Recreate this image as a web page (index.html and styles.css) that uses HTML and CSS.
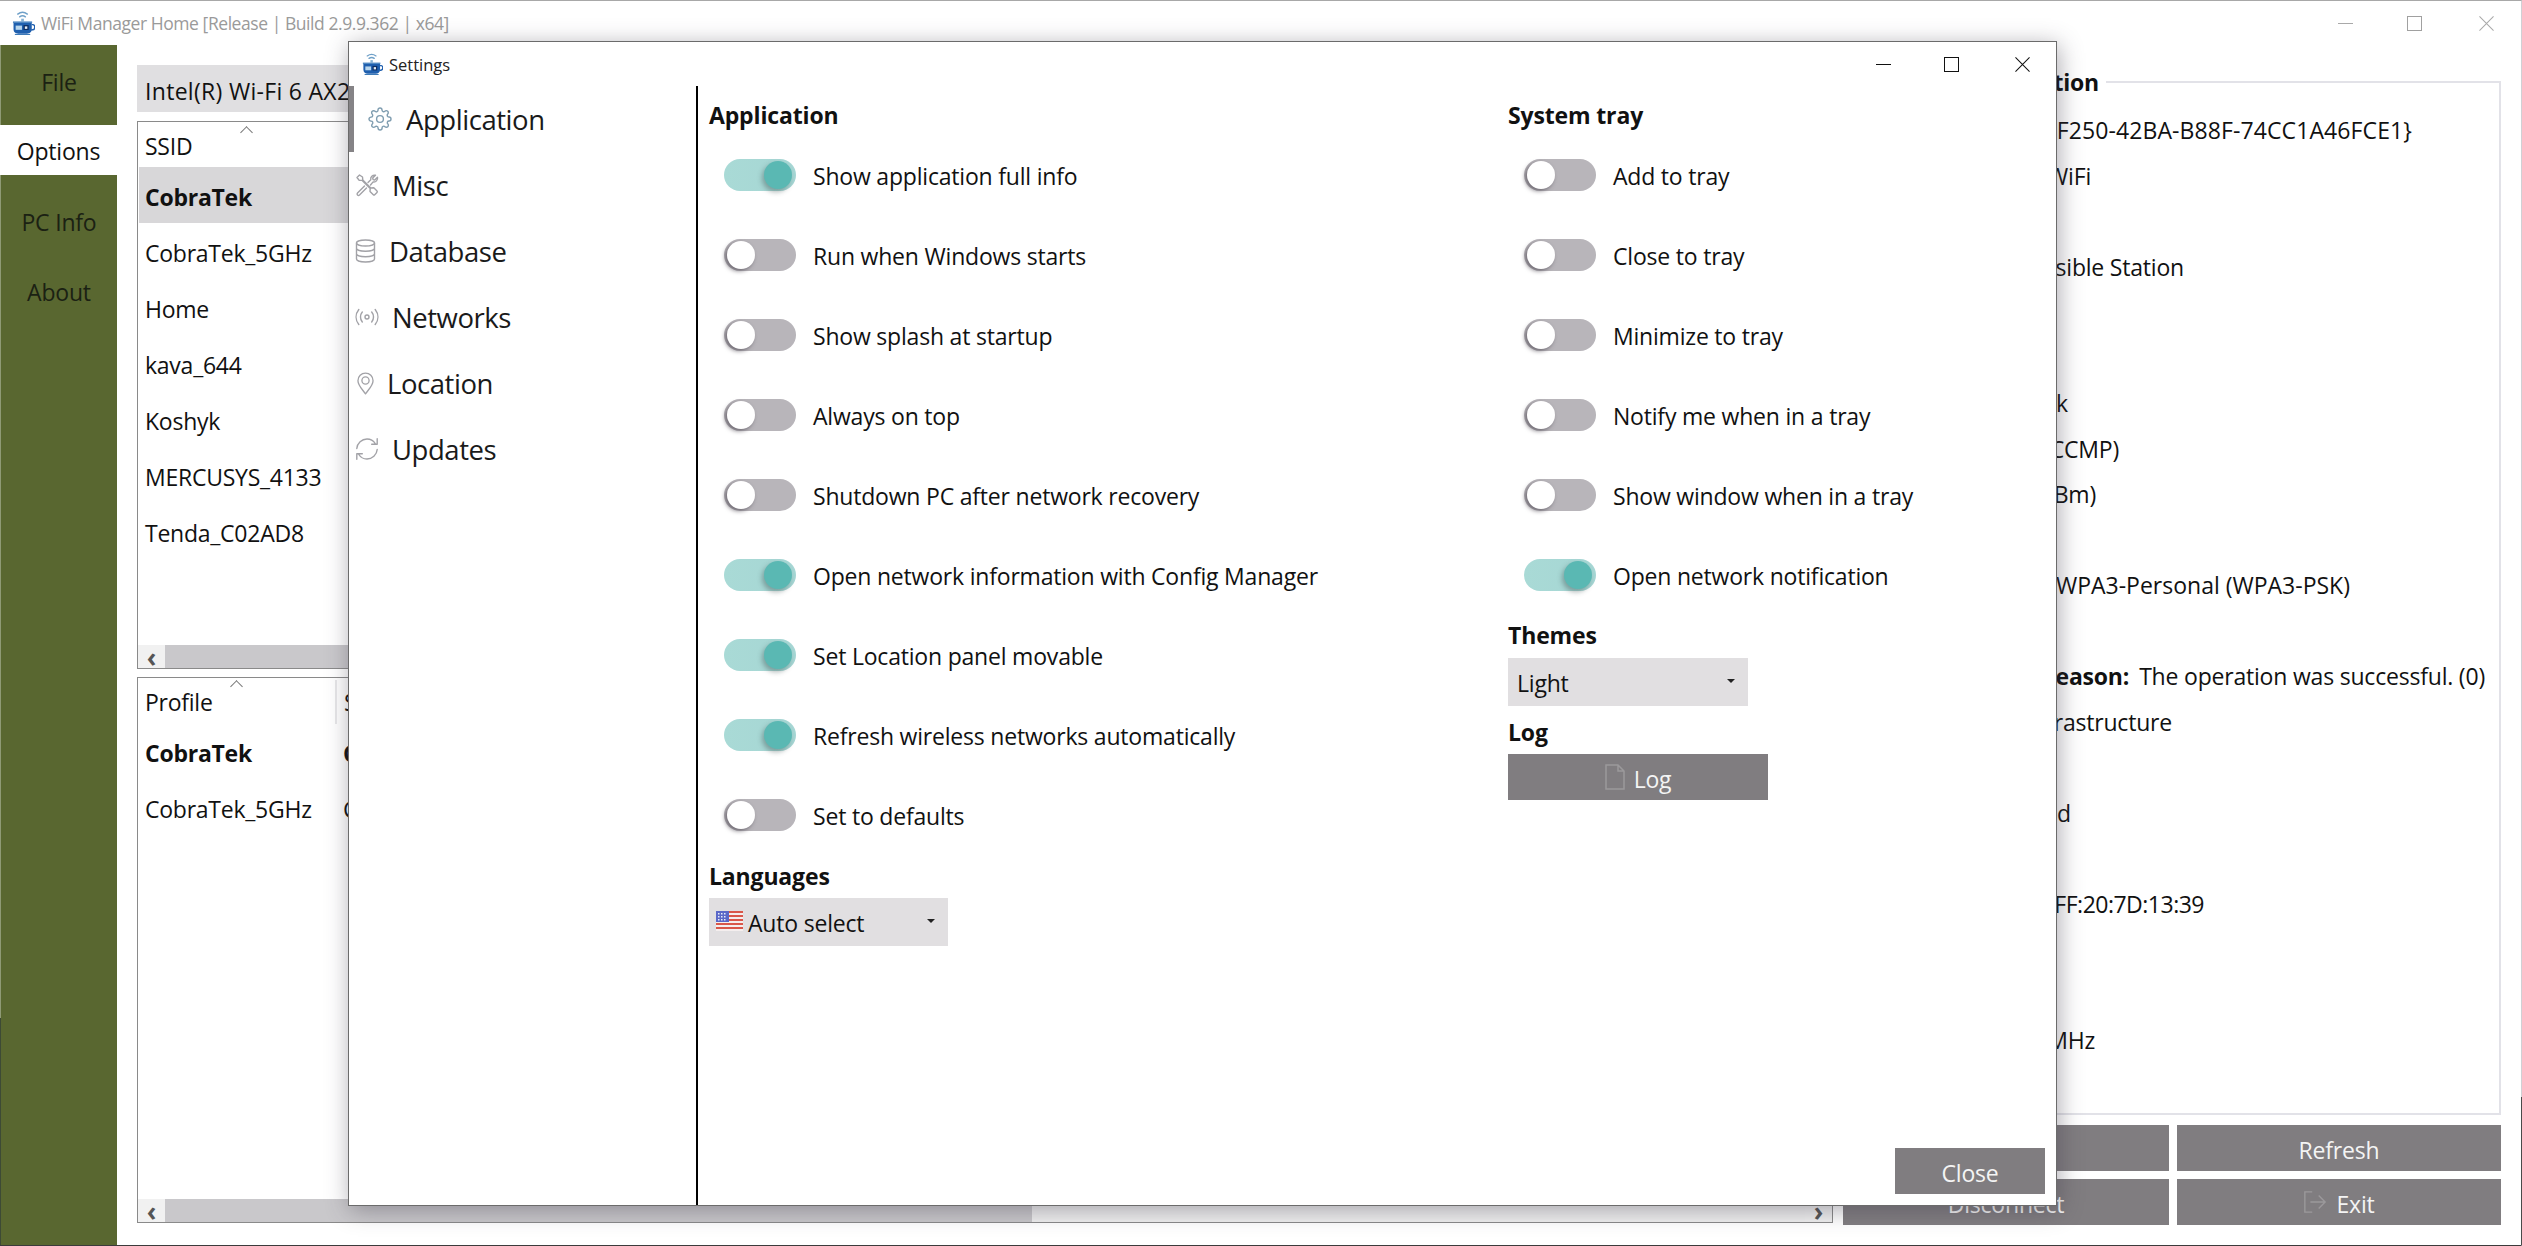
FILE: index.html
```html
<!DOCTYPE html>
<html lang="en">
<head>
<meta charset="utf-8">
<title>WiFi Manager Home</title>
<link rel="stylesheet" href="styles.css">
</head>
<body>
<svg class="defs" width="0" height="0" aria-hidden="true">
  <symbol id="appicon" viewBox="0 0 24 26">
    <g fill="none" stroke="#6fa0c8" stroke-width="1.5" stroke-linecap="round">
      <path d="M6 3.200C9 1 13 1 16 3.200"/>
      <path d="M8 6C10 4.600 12 4.600 14 6"/>
    </g>
    <path d="M9.600 8h2.800v2.800H9.600z" fill="#86b2d4"/>
    <path d="M1 10.800h20v1.800H1z" fill="#4f88c2"/>
    <path d="M1.600 12.400h19V19c0 3-2.400 4.600-5 4.600h-9c-2.600 0-5-1.600-5-4.600z" fill="#1f5fae"/>
    <path d="M20.600 14.200h1.200c2.600 0 2.600 5.200-.2 5.400l-1.600.2" fill="none" stroke="#1f5fae" stroke-width="1.500"/>
    <path d="M3.800 15.200h6.600v4.400H3.800z" fill="#b9d6ec"/>
    <path d="M12 14.600h5.400v5.200H12z" fill="#0e2f63"/>
    <path d="M13.400 16h2.600v2.600h-2.600z" fill="#e7edf4"/>
    <path d="M3 23.800h16v1.200H3z" fill="#3d7ab8"/>
  </symbol>
</svg>

<div class="main">
  <header class="titlebar">
    <svg class="appicon"><use href="#appicon"/></svg>
    <span class="title-text">WiFi Manager Home [Release | Build 2.9.9.362 | x64]</span>
    <div class="win-controls">
      <svg class="wc wc-min" viewBox="0 0 16 16"><path d="M0 8h16"/></svg>
      <svg class="wc wc-max" viewBox="0 0 16 16"><path d="M.5.5h15v15H.5z"/></svg>
      <svg class="wc wc-close" viewBox="0 0 16 16"><path d="M.5.5l15 15M15.500.5l-15 15"/></svg>
    </div>
  </header>

  <div class="workspace">
    <nav class="sidebar">
      <div class="side-tab side-file">File</div>
      <div class="side-tab side-active">Options</div>
      <div class="side-tab side-info">PC Info</div>
      <div class="side-tab">About</div>
    </nav>

    <section class="center">
      <div class="adapter">Intel(R) Wi-Fi 6 AX201 160MHz</div>

      <div class="listbox listbox-top">
        <div class="list-head"><span class="caret caret-a"></span><span>SSID</span></div>
        <div class="list-row list-selected">CobraTek</div>
        <div class="list-row">CobraTek_5GHz</div>
        <div class="list-row">Home</div>
        <div class="list-row">kava_644</div>
        <div class="list-row">Koshyk</div>
        <div class="list-row">MERCUSYS_4133</div>
        <div class="list-row">Tenda_C02AD8</div>
        <div class="list-fill"></div>
        <div class="hscroll">
          <span class="hs-btn">&lsaquo;</span><span class="hs-thumb hs-thumb-wide"></span><span class="hs-track"></span><span class="hs-btn">&rsaquo;</span>
        </div>
      </div>

      <div class="listbox listbox-bottom">
        <div class="list-head list-head-cols">
          <span class="caret caret-b"></span>
          <span class="col-a">Profile</span><span class="col-sep"></span><span class="col-b">SSID</span>
        </div>
        <div class="list-row list-cols list-bold"><span class="col-a">CobraTek</span><span class="col-b">CobraTek</span></div>
        <div class="list-row list-cols"><span class="col-a">CobraTek_5GHz</span><span class="col-b">CobraTek_5GHz</span></div>
        <div class="list-fill"></div>
        <div class="hscroll">
          <span class="hs-btn">&lsaquo;</span><span class="hs-thumb"></span><span class="hs-track"></span><span class="hs-btn">&rsaquo;</span>
        </div>
      </div>
    </section>

    <aside class="details">
      <div class="groupbox">
        <h2 class="group-title">Network information</h2>
        <div class="info-row r-guid">-F250-42BA-B88F-74CC1A46FCE1}</div>
        <div class="info-row r-wifi">WiFi</div>
        <div class="info-row"></div>
        <div class="info-row r-station">Extensible Station</div>
        <div class="info-row"></div>
        <div class="info-row"></div>
        <div class="info-row r-k">k</div>
        <div class="info-row r-ccmp">CCMP)</div>
        <div class="info-row r-bm">Bm)</div>
        <div class="info-row"></div>
        <div class="info-row r-wpa">WPA3-Personal (WPA3-PSK)</div>
        <div class="info-row"></div>
        <div class="info-row r-reason"><b>reason:</b><span class="reason-text">The operation was successful. (0)</span></div>
        <div class="info-row r-infra">Infrastructure</div>
        <div class="info-row"></div>
        <div class="info-row r-ed">ed</div>
        <div class="info-row"></div>
        <div class="info-row r-mac">FF:20:7D:13:39</div>
        <div class="info-row"></div>
        <div class="info-row"></div>
        <div class="info-row r-mhz">MHz</div>
      </div>
      <div class="action-grid">
        <button class="btn">Connect</button>
        <button class="btn">Refresh</button>
        <button class="btn btn-low">Disconnect</button>
        <button class="btn btn-low">
          <svg class="btn-icon" viewBox="0 0 26 26"><path d="M10 2H2v22h8M8 13h16M17 6l7 7-7 7"/></svg>Exit
        </button>
      </div>
    </aside>
  </div>
</div>

<div class="settings">
  <header class="settings-title">
    <svg class="appicon appicon-small"><use href="#appicon"/></svg>
    <span class="settings-name">Settings</span>
    <div class="set-controls">
      <svg class="sc sc-min" viewBox="0 0 16 16"><path d="M0 8h16"/></svg>
      <svg class="sc sc-max" viewBox="0 0 16 16"><path d="M.5.5h15v15H.5z"/></svg>
      <svg class="sc sc-close" viewBox="0 0 16 16"><path d="M.5.5l15 15M15.500.5l-15 15"/></svg>
    </div>
  </header>

  <div class="settings-body">
    <nav class="set-nav">
      <div class="nav-item nav-active">
        <svg class="nav-icon icon-gear" viewBox="0 0 24 24"><circle cx="12" cy="12" r="3.400"/><path d="M19.400 15a1.650 1.650 0 0 0 .33 1.820l.06.06a2 2 0 0 1 0 2.830 2 2 0 0 1-2.830 0l-.06-.06a1.650 1.650 0 0 0-1.820-.33 1.650 1.650 0 0 0-1 1.510V21a2 2 0 0 1-2 2 2 2 0 0 1-2-2v-.09A1.650 1.650 0 0 0 9 19.400a1.650 1.650 0 0 0-1.820.33l-.06.06a2 2 0 0 1-2.830 0 2 2 0 0 1 0-2.830l.06-.06a1.650 1.650 0 0 0 .33-1.820 1.650 1.650 0 0 0-1.510-1H3a2 2 0 0 1-2-2 2 2 0 0 1 2-2h.09A1.650 1.650 0 0 0 4.600 9a1.650 1.650 0 0 0-.33-1.820l-.06-.06a2 2 0 0 1 0-2.830 2 2 0 0 1 2.830 0l.06.06a1.650 1.650 0 0 0 1.820.33H9a1.650 1.650 0 0 0 1-1.510V3a2 2 0 0 1 2-2 2 2 0 0 1 2 2v.09a1.650 1.650 0 0 0 1 1.510 1.650 1.650 0 0 0 1.820-.33l.06-.06a2 2 0 0 1 2.830 0 2 2 0 0 1 0 2.830l-.06.06a1.650 1.650 0 0 0-.33 1.820V9a1.650 1.650 0 0 0 1.510 1H21a2 2 0 0 1 2 2 2 2 0 0 1-2 2h-.09a1.650 1.650 0 0 0-1.510 1z"/></svg>
        <span>Application</span>
      </div>
      <div class="nav-item">
        <svg class="nav-icon" viewBox="0 0 24 24"><path d="M2 4.500L4.500 2l3 2 .3 3 8 8 3-.2 3.200 3.200a1 1 0 0 1 0 1.400l-2.300 2.300a1 1 0 0 1-1.400 0L15 18.400l.2-3-8-8-3.200-.2z"/><path d="M13 9.500l2.800-2.800c-.6-2.600 1.800-5 4.700-4.400L17.700 5l.4 1.600 1.600.4 2.800-2.800c.6 2.900-1.800 5.300-4.400 4.700L15.500 12M9.500 13l-7 7a1.500 1.500 0 0 0 0 2 1.500 1.500 0 0 0 2 0l7-7"/></svg>
        <span>Misc</span>
      </div>
      <div class="nav-item">
        <svg class="nav-icon icon-db" viewBox="0 0 20 24"><ellipse cx="10" cy="4" rx="9" ry="3"/><path d="M1 4v16c0 1.700 4 3 9 3s9-1.300 9-3V4M1 9.300c0 1.700 4 3 9 3s9-1.300 9-3M1 14.700c0 1.700 4 3 9 3s9-1.300 9-3"/></svg>
        <span>Database</span>
      </div>
      <div class="nav-item">
        <svg class="nav-icon" viewBox="0 0 24 24"><circle cx="12" cy="12" r="2"/><path d="M7.300 7c-2.400 2.800-2.400 7.200 0 10M16.700 7c2.400 2.800 2.400 7.200 0 10M3.800 4.500c-3.600 4.600-3.600 10.400 0 15M20.200 4.500c3.600 4.600 3.600 10.400 0 15"/></svg>
        <span>Networks</span>
      </div>
      <div class="nav-item nav-loc">
        <svg class="nav-icon icon-loc" viewBox="0 0 18 24"><path d="M9 23C5.500 18 1 13.800 1 9a8 8 0 0 1 16 0c0 4.800-4.500 9-8 14z"/><circle cx="9" cy="8.800" r="3.800"/></svg>
        <span>Location</span>
      </div>
      <div class="nav-item">
        <svg class="nav-icon" viewBox="0 0 24 24"><path d="M1.800 11.500C2.200 6 6.800 2 12 2c3.500 0 6.500 1.800 8.200 4.500M22.200 1.800v5.500h-5.500"/><path d="M22.200 12.500C21.800 18 17.200 22 12 22c-3.500 0-6.500-1.800-8.200-4.500M1.800 22.200v-5.500h5.500"/></svg>
        <span>Updates</span>
      </div>
    </nav>

    <div class="set-content">
      <div class="set-columns">
        <div class="set-col col-left">
          <h3 class="set-head">Application</h3>
          <div class="toggle-list">
            <label class="toggle-row"><span class="toggle on"></span><span>Show application full info</span></label>
            <label class="toggle-row"><span class="toggle"></span><span>Run when Windows starts</span></label>
            <label class="toggle-row"><span class="toggle"></span><span>Show splash at startup</span></label>
            <label class="toggle-row"><span class="toggle"></span><span>Always on top</span></label>
            <label class="toggle-row"><span class="toggle"></span><span>Shutdown PC after network recovery</span></label>
            <label class="toggle-row"><span class="toggle on"></span><span>Open network information with Config Manager</span></label>
            <label class="toggle-row"><span class="toggle on"></span><span>Set Location panel movable</span></label>
            <label class="toggle-row"><span class="toggle on"></span><span>Refresh wireless networks automatically</span></label>
            <label class="toggle-row"><span class="toggle"></span><span>Set to defaults</span></label>
          </div>
          <h3 class="set-head head-lang">Languages</h3>
          <div class="dropdown dropdown-lang">
            <svg class="flag" viewBox="0 0 27 20">
              <rect width="27" height="20" fill="#f4eeee"/>
              <path d="M0 0h27v2H0zM0 4h27v2H0zM0 8h27v2H0zM0 12h27v2H0zM0 16h27v2H0z" fill="#d9574a"/>
              <rect width="13" height="11" fill="#5a68c8"/>
              <path d="M2 2h1.500v1.500H2zM5 2h1.500v1.500H5zM8 2h1.500v1.500H8zM2 5h1.500v1.500H2zM5 5h1.500v1.500H5zM8 5h1.500v1.500H8zM2 8h1.500v1.500H2zM5 8h1.500v1.500H5zM8 8h1.500v1.500H8z" fill="#e8ecf8"/>
            </svg>
            <span class="dd-text">Auto select</span>
            <span class="dd-arrow"></span>
          </div>
        </div>

        <div class="set-col col-right">
          <h3 class="set-head">System tray</h3>
          <div class="toggle-list">
            <label class="toggle-row"><span class="toggle"></span><span>Add to tray</span></label>
            <label class="toggle-row"><span class="toggle"></span><span>Close to tray</span></label>
            <label class="toggle-row"><span class="toggle"></span><span>Minimize to tray</span></label>
            <label class="toggle-row"><span class="toggle"></span><span>Notify me when in a tray</span></label>
            <label class="toggle-row"><span class="toggle"></span><span>Show window when in a tray</span></label>
            <label class="toggle-row"><span class="toggle on"></span><span>Open network notification</span></label>
          </div>
          <h3 class="set-head head-themes">Themes</h3>
          <div class="dropdown dropdown-theme">
            <span class="dd-text">Light</span>
            <span class="dd-arrow"></span>
          </div>
          <h3 class="set-head head-log">Log</h3>
          <button class="btn btn-log">
            <svg class="btn-icon log-icon" viewBox="0 0 20 26"><path d="M1 1h12l6 6v18H1zM13 1v6h6"/></svg>Log
          </button>
        </div>
      </div>
      <div class="set-footer">
        <button class="btn btn-close">Close</button>
      </div>
    </div>
  </div>
</div>
</body>
</html>
```
FILE: styles.css
```css
* { box-sizing: border-box; }
html, body {
  margin: 0;
  padding: 0;
  width: 2522px;
  height: 1246px;
  overflow: hidden;
  background: #fff;
}
body {
  position: relative;
  font-family: "Open Sans", "Noto Sans", sans-serif;
  font-size: 23px;
  letter-spacing: -0.2px;
  color: #111;
}
.defs { position: absolute; }

/* main window */
.main {
  position: relative;
  width: 2522px;
  height: 1246px;
  display: flex;
  flex-direction: column;
  border-top: 1px solid #a8a8a8;
  border-right: 1px solid #d0d0d4;
  border-bottom: 1px solid #3b3b3b;
  background: #fff;
}
.main::after {
  content: "";
  position: absolute;
  right: -1px;
  top: 1096px;
  bottom: 0;
  width: 1px;
  background: #4a4a4a;
}
.titlebar {
  height: 44px;
  flex: none;
  display: flex;
  align-items: center;
  padding-left: 12px;
}
.appicon { width: 23px; height: 25px; flex: none; }
.title-text {
  margin-left: 6px;
  color: #9a9a9a;
  font-size: 17.500px;
  letter-spacing: -0.440px;
}
.win-controls {
  margin-left: auto;
  display: flex;
  align-items: center;
  gap: 54px;
  padding-right: 27px;
}
.wc { width: 15px; height: 15px; fill: none; stroke: #a9a9a9; stroke-width: 1.1; }
.wc-max { stroke: #a0a0a0; }
.wc-close { margin-left: 3px; }

.workspace { flex: 1; min-height: 0; display: flex; }

.sidebar {
  position: relative;
  width: 117px;
  flex: none;
  background: #596730;
  display: flex;
  flex-direction: column;
  border-left: 1px solid #8f9a75;
}
.sidebar::after {
  content: "";
  position: absolute;
  left: -1px;
  top: 973px;
  bottom: 0;
  width: 1px;
  background: #3d4a35;
}
.side-tab {
  height: 70px;
  display: flex;
  align-items: center;
  justify-content: center;
  color: #1b2113;
}
.side-file { height: 80px; padding-bottom: 6px; }
.side-active { height: 50px; background: #fff; color: #111; margin-left: -1px; padding-top: 2px; }
.side-info { margin-top: 12px; }

.center {
  flex: none;
  width: 1716px;
  padding: 20px 0 0 20px;
  display: flex;
  flex-direction: column;
  letter-spacing: -0.25px;
}
.adapter {
  height: 47px;
  background: #e0dfe1;
  display: flex;
  align-items: center;
  padding: 5px 0 0 8px;
  margin-bottom: 9px;
  white-space: nowrap;
  letter-spacing: 0.3px;
}
.listbox {
  border: 1px solid #8a8a8a;
  display: flex;
  flex-direction: column;
  width: 1696px;
  background: #fff;
}
.listbox-top { height: 548px; margin-bottom: 8px; }
.listbox-bottom { height: 546px; }
.list-head {
  height: 45px;
  display: flex;
  align-items: center;
  padding: 3px 0 0 7px;
  position: relative;
  flex: none;
}
.caret {
  position: absolute;
  width: 9px;
  height: 9px;
  border-left: 1px solid #777;
  border-top: 1px solid #777;
  transform: rotate(45deg);
}
.caret-a { left: 104px; top: 6px; }
.caret-b { left: 94px; top: 4px; }
.list-row {
  height: 56px;
  display: flex;
  align-items: center;
  padding: 3px 0 0 7px;
  flex: none;
}
.list-selected { background: #d8d7d9; font-weight: 700; margin-left: 1px; padding-left: 6px; }
.list-bold { font-weight: 700; }
.list-fill { flex: 1; }
.col-a { width: 198px; flex: none; }
.col-sep { width: 2px; height: 44px; background: #e7e7e9; margin: 0 7px 0 -8px; flex: none; }
.hscroll {
  height: 23px;
  flex: none;
  display: flex;
  background: #f0f0f0;
}
.hs-btn {
  width: 27px;
  flex: none;
  display: flex;
  align-items: center;
  justify-content: center;
  color: #555;
  font-size: 26px;
  font-weight: 700;
  line-height: 20px;
  background: #f1f1f1;
}
.hs-thumb { width: 867px; flex: none; background: #c9c8cb; }
.hs-track { flex: 1; background: #f0f0f0; }

/* right details */
.details {
  flex: none;
  width: 658px;
  margin-left: 10px;
  display: flex;
  flex-direction: column;
  padding-top: 36px;
}
.groupbox {
  height: 1034px;
  border: 2px solid #e2e2e8;
  position: relative;
  padding-top: 25px;
}
.group-title {
  position: absolute;
  top: -18px;
  right: 393px;
  margin: 0;
  font-size: 23px;
  font-weight: 700;
  line-height: 34px;
  background: #fff;
  padding-right: 7px;
  white-space: nowrap;
}
.info-row {
  height: 45.500px;
  line-height: 45.500px;
  text-align: right;
  white-space: nowrap;
}
.r-guid { padding-right: 87px; letter-spacing: 0.1px; }
.r-wifi { padding-right: 408px; }
.r-station { padding-right: 315px; }
.r-k { padding-right: 431px; }
.r-ccmp { padding-right: 380px; }
.r-bm { padding-right: 403px; }
.r-wpa { padding-right: 149px; letter-spacing: 0; }
.r-reason { padding-right: 14px; }
.reason-text { margin-left: 10px; }
.r-infra { padding-right: 327px; }
.r-ed { padding-right: 428px; }
.r-mac { padding-right: 295px; letter-spacing: -0.5px; }
.r-mhz { padding-right: 404px; }

.action-grid {
  display: grid;
  grid-template-columns: 326px 324px;
  grid-template-rows: 46px 46px;
  column-gap: 8px;
  row-gap: 8px;
  margin-top: 10px;
}
.btn {
  border: 0;
  background: #807d80;
  color: #f4f4f4;
  font-family: inherit;
  font-size: inherit;
  letter-spacing: inherit;
  display: flex;
  align-items: center;
  justify-content: center;
  padding: 3px 0 0;
}
.btn-icon {
  fill: none;
  stroke: #9b999b;
  stroke-width: 1.500;
  width: 24px;
  height: 24px;
  margin-right: 9px;
  margin-top: -4px;
}
.log-icon { width: 20px; height: 26px; }

/* settings dialog */
.settings {
  position: absolute;
  left: 348px;
  top: 41px;
  width: 1709px;
  height: 1165px;
  background: #fff;
  border: 1px solid #6b6b6b;
  box-shadow: 2px 4px 22px rgba(60, 55, 70, 0.42);
  display: flex;
  flex-direction: column;
}
.settings-title {
  height: 44px;
  flex: none;
  display: flex;
  align-items: center;
  padding-left: 13px;
}
.appicon-small { width: 21px; height: 23px; }
.settings-name {
  margin-left: 6px;
  font-size: 16.500px;
  letter-spacing: 0;
  color: #222;
}
.set-controls {
  margin-left: auto;
  display: flex;
  align-items: center;
  gap: 53px;
  padding-right: 26px;
}
.sc { width: 15px; height: 15px; fill: none; stroke: #111; stroke-width: 1.1; }
.sc-close { margin-left: 3px; }

.settings-body { flex: 1; min-height: 0; display: flex; }
.set-nav {
  width: 349px;
  flex: none;
  border-right: 2px solid #000;
  position: relative;
}
.nav-item {
  height: 66px;
  display: flex;
  align-items: center;
  gap: 13px;
  padding-left: 6px;
  font-size: 27.500px;
  letter-spacing: -0.45px;
  color: #1a1a1a;
}
.nav-active { padding-left: 19px; gap: 14px; position: relative; }
.nav-active::before {
  content: "";
  position: absolute;
  left: 0;
  top: 0;
  width: 5px;
  height: 66px;
  background: #858386;
}
.nav-icon {
  width: 24px;
  height: 24px;
  flex: none;
  fill: none;
  stroke: #a2a2a7;
  stroke-width: 1.400;
  stroke-linecap: round;
  stroke-linejoin: round;
}
.icon-gear { stroke: #7f9db0; }
.icon-db { width: 21px; }
.icon-loc { width: 17px; height: 23px; margin-left: 2px; }

.set-content {
  flex: 1;
  min-width: 0;
  display: flex;
  flex-direction: column;
}
.set-columns { flex: 1; display: flex; padding: 14px 0 0 11px; }
.set-col { display: flex; flex-direction: column; align-items: flex-start; }
.col-left { width: 799px; }
.col-right { width: 500px; }
.col-right .toggle-row { padding-left: 16px; }
.set-head {
  margin: 0;
  height: 32px;
  line-height: 30px;
  font-size: 23px;
  font-weight: 700;
  letter-spacing: -0.15px;
}
.toggle-list { margin-top: 4px; width: 100%; }
.toggle-row {
  height: 80px;
  display: flex;
  align-items: center;
  gap: 17px;
  padding-left: 15px;
  white-space: nowrap;
}
.toggle {
  width: 72px;
  height: 32px;
  margin-top: -3px;
  border-radius: 16px;
  background: #b8b5ba;
  position: relative;
  flex: none;
}
.toggle::after {
  content: "";
  position: absolute;
  left: 3px;
  top: 2px;
  width: 28px;
  height: 28px;
  border-radius: 50%;
  background: #fff;
  box-shadow: -2px 2px 4px rgba(70, 65, 75, 0.65);
}
.toggle.on {
  background: linear-gradient(90deg, #a9dad6, #a6d6d4);
}
.toggle.on::after {
  left: 40px;
  background: #5ab8b3;
  box-shadow: -2px 3px 5px rgba(70, 90, 90, 0.45);
}
.head-lang { margin-top: 5px; }
.dropdown {
  background: #e1dfe1;
  height: 48px;
  margin-top: 5px;
  display: flex;
  align-items: center;
  position: relative;
}
.dd-text { padding-top: 2px; }
.dropdown-lang { width: 239px; padding-left: 7px; }
.dropdown-theme { width: 240px; padding-left: 9px; margin-top: 6px; }
.flag { width: 27px; height: 20px; flex: none; margin-right: 5px; margin-top: -3px; }
.dd-arrow {
  position: absolute;
  right: 13px;
  top: 21px;
  width: 0;
  height: 0;
  border-left: 4px solid transparent;
  border-right: 4px solid transparent;
  border-top: 4px solid #222;
}
.head-themes { margin-top: 4px; }
.head-log { margin-top: 11px; }
.btn-log { width: 260px; height: 46px; margin-top: 5px; }
.set-footer {
  flex: none;
  display: flex;
  justify-content: flex-end;
  padding: 0 11px 11px 0;
}
.btn-close { width: 150px; height: 46px; }
```
